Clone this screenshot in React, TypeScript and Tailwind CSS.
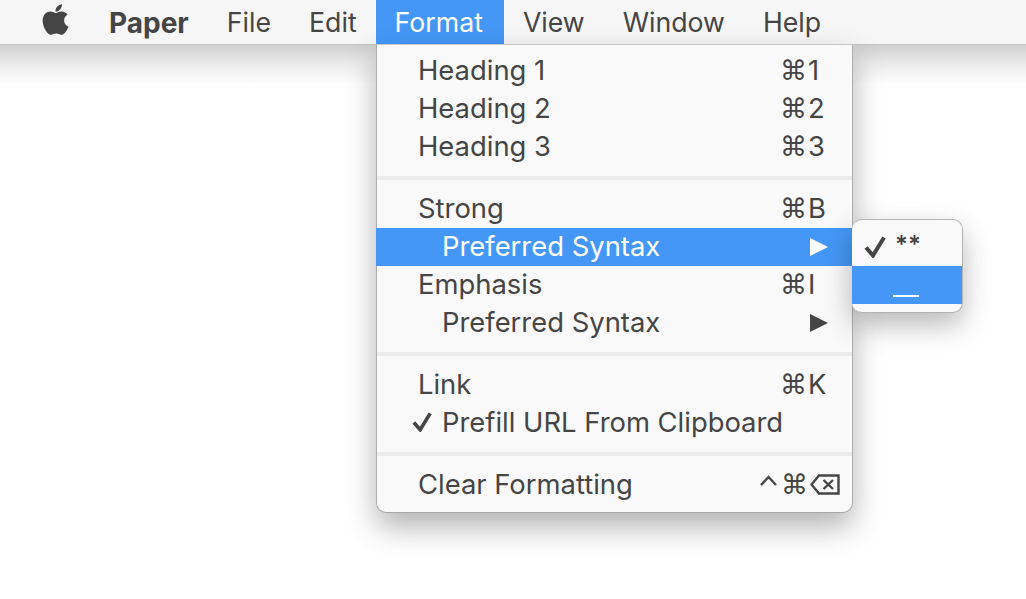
import { FaApple } from "react-icons/fa";

const font = "font-['Inter',sans-serif]";

function Check({ className }: { className: string }) {
	return (
		<svg viewBox="0 0 22 22" className={className} fill="none" stroke="currentColor" strokeWidth="4">
			<path d="M2 11.5 L9 19.5 L20 1.5" />
		</svg>
	);
}

function Arrow() {
	return (
		<svg viewBox="0 0 18 18" className="h-[18px] w-[18px]" fill="currentColor">
			<path d="M0 0 L18 9 L0 18 Z" />
		</svg>
	);
}

function Caret() {
	return (
		<svg viewBox="0 0 17 11" className="h-[11px] w-[17px]" fill="none" stroke="currentColor" strokeWidth="2.4">
			<path d="M1 10 L8.5 2 L16 10" />
		</svg>
	);
}

function DeleteKey() {
	return (
		<svg viewBox="0 0 30 21" className="h-[21px] w-[30px]" fill="none" stroke="currentColor" strokeWidth="2.4">
			<path d="M9 1.5 H28.5 V19.5 H9 L1.5 10.5 Z" />
			<path d="M13.5 6 L23 15 M23 6 L13.5 15" />
		</svg>
	);
}

function Separator() {
	return <div className="my-[10px] h-[4px] bg-[#ebebeb]" />;
}

function Shortcut({ keys }: { keys: string }) {
	return (
		<div className="ml-auto flex w-[72px] items-center">
			<span className="w-[28px] font-['DejaVu_Sans',sans-serif] text-[27px] leading-none">⌘</span>
			<span>{keys}</span>
		</div>
	);
}

function Item({ label, keys }: { label: string; keys?: string }) {
	return (
		<div className="flex h-[38px] items-center pb-[1px] pl-[41px]">
			<span>{label}</span>
			{keys && <Shortcut keys={keys} />}
		</div>
	);
}

function SubItem({ active }: { active?: boolean }) {
	return (
		<div className={"-mx-px flex h-[38px] items-center pb-[1px] pl-[66px] pr-[25px] " + (active ? "bg-[#4497f6] text-white" : "")}>
			<span>Preferred Syntax</span>
			<span className="-mb-px ml-auto">
				<Arrow />
			</span>
		</div>
	);
}

export default function App() {
	const left = ["File", "Edit"];
	const right = ["View", "Window", "Help"];
	return (
		<div className={font + " relative h-[599px] w-[1026px] overflow-hidden bg-white text-[27.4px] text-[#454545]"}>
			<div className="flex h-[45px] items-stretch border-b border-[#c6c6c6] bg-[#f6f6f6] pl-[42px] text-[26.7px]">
				<div className="flex w-[48px] items-center pb-[5px]">
					<FaApple className="h-[35px] w-[27px]" />
				</div>
				<div className="flex items-center px-[19px] pt-px text-[28px] font-bold">Paper</div>
				{left.map((m) => (
					<div key={m} className="flex items-center px-[19px] pt-px">{m}</div>
				))}
				<div className="-mb-px flex items-center bg-[#4497f6] pl-[19px] pr-[21px] text-white">Format</div>
				{right.map((m) => (
					<div key={m} className="flex items-center px-[19px] pt-px">{m}</div>
				))}
			</div>
			<div className="h-[40px] bg-linear-to-b from-[#cfcfcf] via-[#ececec] to-white" />

			<div className="absolute left-[376px] top-[44px] w-[477px] rounded-b-[10px] border border-x-[#b0b0b0] border-b-[#a8a8a8] border-t-[#c6c6c6] bg-[#f9f9f9] pb-[8px] pt-[7px] shadow-[0_14px_30px_rgba(0,0,0,0.3)]">
				<Item label="Heading 1" keys="1" />
				<Item label="Heading 2" keys="2" />
				<Item label="Heading 3" keys="3" />
				<Separator />
				<Item label="Strong" keys="B" />
				<SubItem active />
				<Item label="Emphasis" keys="I" />
				<SubItem />
				<Separator />
				<Item label="Link" keys="K" />
				<div className="relative flex h-[38px] items-center pb-[1px] pl-[65px]">
					<Check className="absolute left-[35px] top-[8px] h-[20px] w-[20px]" />
					<span>Prefill URL From Clipboard</span>
				</div>
				<Separator />
				<div className="flex h-[38px] items-center pb-[1px] pl-[41px] pr-[12px]">
					<span>Clear Formatting</span>
					<div className="ml-auto flex items-center">
						<span className="mb-[8px] mr-[4px]">
							<Caret />
						</span>
						<span className="w-[29px] font-['DejaVu_Sans',sans-serif] text-[27px] leading-none">⌘</span>
						<DeleteKey />
					</div>
				</div>
			</div>

			<div className="absolute left-[852px] top-[219px] w-[111px] overflow-hidden rounded-[10px] border border-l-0 border-[#b4b4b4] bg-[#f9f9f9] pb-[8px] pt-[8px] shadow-[0_12px_28px_rgba(0,0,0,0.28)]">
				<div className="flex h-[38px] items-center pl-[12px]">
					<Check className="h-[22px] w-[22px]" />
					<span className="mb-[4px] ml-[9px] text-[24px] font-semibold">**</span>
				</div>
				<div className="flex h-[38px] items-end bg-[#4497f6] pb-[7px] pl-[41px] text-white">
					<div className="h-[2px] w-[26px] bg-white" />
				</div>
			</div>
		</div>
	);
}
